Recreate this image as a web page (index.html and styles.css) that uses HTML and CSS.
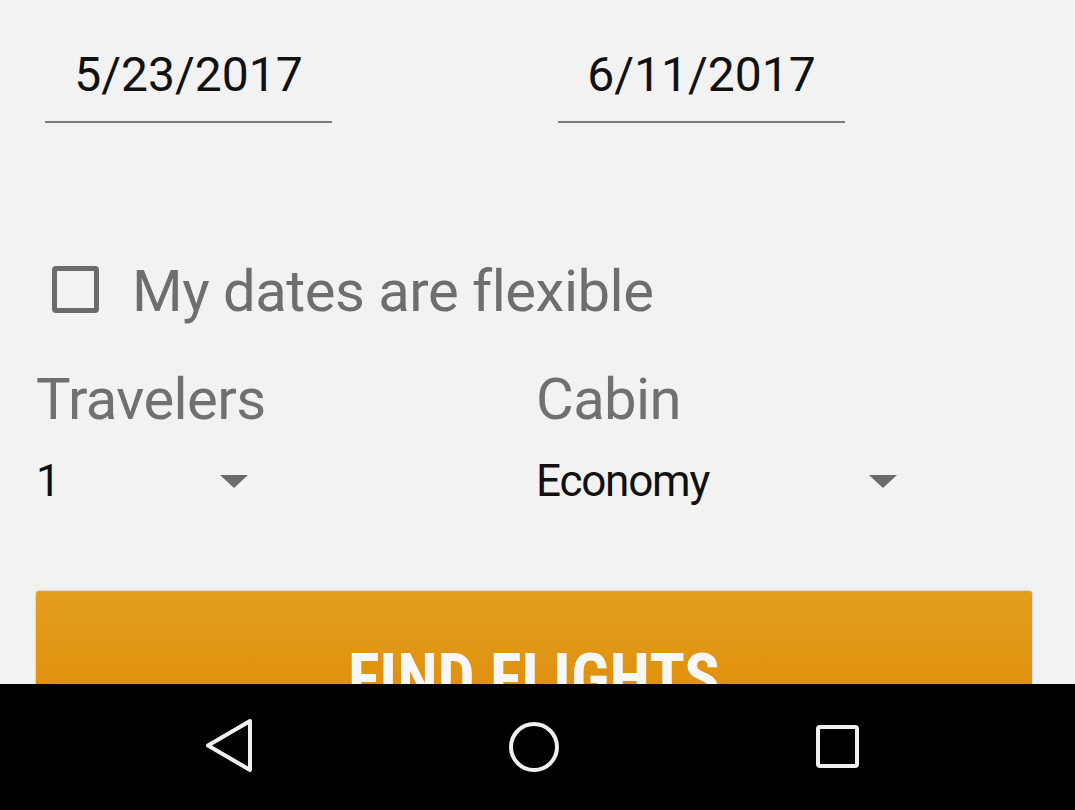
FILE: index.html
```html
<!DOCTYPE html>
<html>
<head>
<meta charset="utf-8">
<link rel="stylesheet" href="styles.css">
</head>
<body>
<div class="screen">
  <main class="content">
    <div class="dates">
      <div class="date-field">5/23/2017</div>
      <div class="date-field">6/11/2017</div>
    </div>
    <label class="flex-row">
      <span class="checkbox"></span>
      <span class="flex-text">My dates are flexible</span>
    </label>
    <div class="selects">
      <div class="select-col">
        <div class="select-label">Travelers</div>
        <div class="spinner"><span class="spinner-value">1</span><span class="arrow"></span></div>
      </div>
      <div class="select-col">
        <div class="select-label">Cabin</div>
        <div class="spinner"><span class="spinner-value">Economy</span><span class="arrow"></span></div>
      </div>
    </div>
    <button class="find-btn">FIND FLIGHTS</button>
  </main>
  <nav class="navbar">
    <div class="nav-item">
      <svg width="60" height="60" viewBox="0 0 60 60"><path d="M50 4 L8 28.5 L50 53 Z" fill="none" stroke="#f0f0f0" stroke-width="4" stroke-linejoin="round"/></svg>
    </div>
    <div class="nav-item">
      <svg width="60" height="60" viewBox="0 0 60 60"><circle cx="30" cy="30" r="23" fill="none" stroke="#f0f0f0" stroke-width="4"/></svg>
    </div>
    <div class="nav-item">
      <svg width="60" height="60" viewBox="0 0 60 60"><rect x="10" y="10" width="39" height="39" rx="2" fill="none" stroke="#f0f0f0" stroke-width="4"/></svg>
    </div>
  </nav>
</div>
</body>
</html>
```
FILE: styles.css
```css
html, body {
  margin: 0;
  padding: 0;
}
body {
  background: #f2f2f2;
  font-family: Roboto, "Noto Sans", sans-serif;
}
.screen {
  width: 1075px;
  height: 810px;
  display: flex;
  flex-direction: column;
  overflow: hidden;
}
.content {
  height: 684px;
  overflow: hidden;
  display: flex;
  flex-direction: column;
  background: #f2f2f2;
}
.dates {
  display: flex;
  gap: 226px;
  padding: 46px 0 0 45px;
}
.date-field {
  width: 287px;
  text-align: center;
  font-size: 48px;
  color: #111;
  padding-bottom: 18px;
  border-bottom: 2px solid #7a7a7a;
  line-height: 57px;
}
.flex-row {
  display: flex;
  align-items: center;
  margin-top: 134px;
  padding-left: 52px;
}
.checkbox {
  width: 37px;
  height: 37px;
  border: 5px solid #6b6b6b;
  border-radius: 4px;
  flex: none;
  margin-top: -4px;
}
.flex-text {
  margin-left: 33px;
  font-size: 58px;
  line-height: 68px;
  color: #6e6e6e;
  letter-spacing: -0.5px;
}
.selects {
  display: flex;
  padding-left: 36px;
  margin-top: 40px;
}
.select-col {
  width: 500px;
}
.select-label {
  font-size: 58px;
  line-height: 68px;
  color: #707070;
  letter-spacing: -0.6px;
}
.spinner {
  display: flex;
  align-items: center;
  margin-top: 22px;
}
.spinner-value {
  font-size: 44px;
  line-height: 52px;
  color: #111;
  letter-spacing: -1.2px;
}
.arrow {
  margin-left: 160px;
  width: 0;
  height: 0;
  border-left: 14px solid transparent;
  border-right: 14px solid transparent;
  border-top: 13px solid #6b6b6b;
}
.find-btn {
  margin: 84px 0 0 36px;
  width: 996px;
  height: 140px;
  flex: none;
  border: none;
  border-radius: 3px;
  background: linear-gradient(#e39f1c, #de8a08);
  box-shadow: 0 0 2px rgba(0,0,0,0.35);
  color: #f7f7f7;
  font-family: "Liberation Sans Narrow", "Roboto Condensed", Roboto, sans-serif;
  font-weight: 700;
  font-size: 66px;
  padding: 35px 0 0 0;
  line-height: 1;
}
.navbar {
  height: 126px;
  flex: none;
  background: #000;
  display: grid;
  grid-template-columns: repeat(3, 1fr);
  padding: 0 85px 0 78px;
  align-items: center;
}
.nav-item {
  display: flex;
  justify-content: center;
  align-items: center;
}
.nav-item svg {
  display: block;
}
```
